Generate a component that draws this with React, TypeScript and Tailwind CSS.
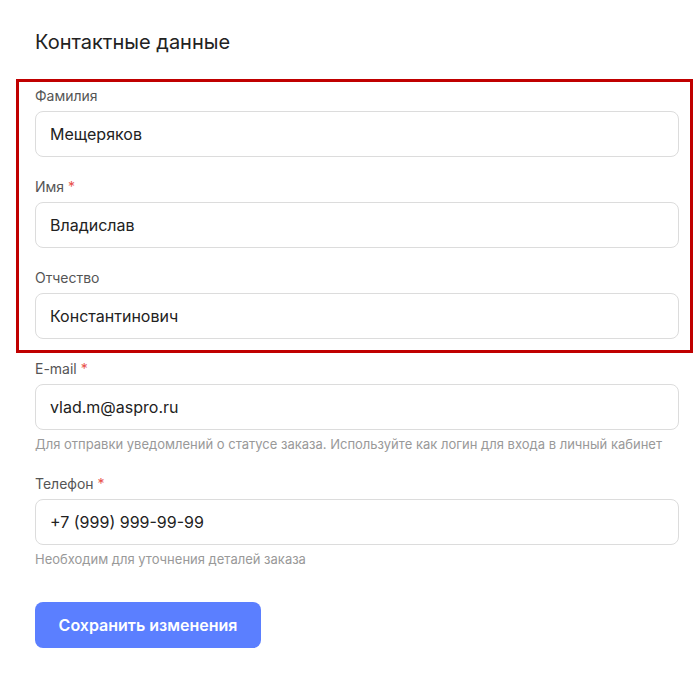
type FieldProps = {
  label: string;
  value: string;
  required?: boolean;
  hint?: string;
  first?: boolean;
};

function Field({ label, value, required, hint, first }: FieldProps) {
  return (
    <div className={first ? "" : "mt-5"}>
      <div className="text-[14px] leading-5 text-[#555]">
        {label}
        {required && <span className="text-[#e8514b]"> *</span>}
      </div>
      <div className="mt-[5px] h-[46px] rounded-lg border border-[#dcdcdc] bg-white pl-[14px] flex items-center text-[16px] text-[#222]">
        {value}
      </div>
      {hint && <div className="mt-[6px] text-[13px] leading-4 text-[#999]">{hint}</div>}
    </div>
  );
}

export default function App() {
  return (
    <div className="min-h-screen bg-white pl-[35px] pr-[18px] pt-[28px] font-['Inter',sans-serif]">
      <h2 className="text-[20px] leading-7 font-normal text-[#222]">Контактные данные</h2>

      {/* highlighted block */}
      <div className="mt-[23px] -ml-[19px] -mr-[14px] border-[3px] border-[#c00000] pl-4 pr-[11px] pt-1 pb-[11px]">
        <Field first label="Фамилия" value="Мещеряков" />
        <Field label="Имя" value="Владислав" required />
        <Field label="Отчество" value="Константинович" />
      </div>

      <div className="mt-[6px]">
        <Field
          first
          label="E-mail"
          value="vlad.m@aspro.ru"
          required
          hint="Для отправки уведомлений о статусе заказа. Используйте как логин для входа в личный кабинет"
        />
        <div className="mt-[22px]">
          <Field first label="Телефон" value="+7 (999) 999-99-99" required hint="Необходим для уточнения деталей заказа" />
        </div>
      </div>

      <button className="mt-[35px] h-[46px] w-[226px] rounded-lg bg-[#5b7fff] text-[16px] font-semibold text-white">
        Сохранить изменения
      </button>
    </div>
  );
}
